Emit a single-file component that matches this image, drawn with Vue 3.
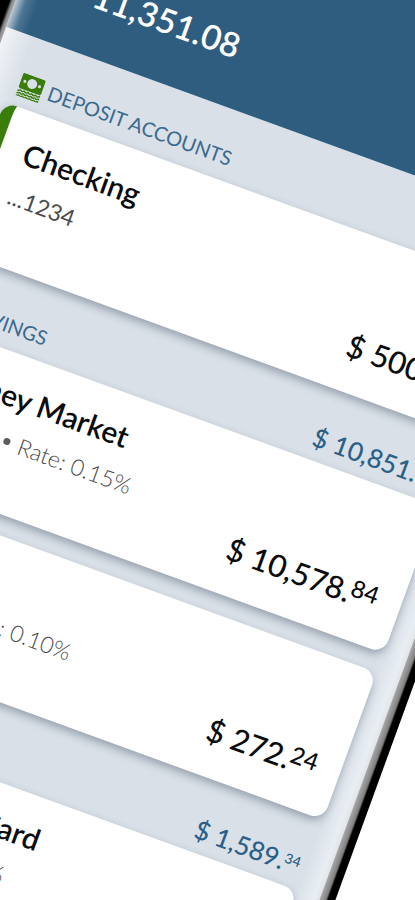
<template>
  <main class="stage">
    <div class="phone">
      <div class="screen">
        <header class="summary">
          <p class="balance">11,351.08</p>
        </header>

        <section v-for="group in groups" :key="group.name" class="group">
          <div class="heading" :class="{ inset: group.inset }">
            <svg class="icon" viewBox="0 0 24 24" aria-hidden="true">
              <path
                fill-rule="evenodd"
                d="M2 0h20a2 2 0 0 1 2 2v12a2 2 0 0 1-2 2H2a2 2 0 0 1-2-2V2a2 2 0 0 1 2-2zM12 3a5 5 0 1 0 0 10a5 5 0 1 0 0-10zM4.200 6.500a1.500 1.500 0 1 0 0 3a1.500 1.500 0 1 0 0-3zM19.800 6.500a1.500 1.500 0 1 0 0 3a1.500 1.500 0 1 0 0-3z"
              />
              <path
                v-for="y in [18, 20.7, 23.4]"
                :key="y"
                class="wave"
                :d="`M0 ${y}q1 1 2 0t2 0t2 0t2 0t2 0t2 0t2 0t2 0t2 0t2 0t2 0t2 0`"
              />
            </svg>
            <h2>{{ group.name }}</h2>
            <p v-if="group.total" class="total">
              $ {{ group.total[0] }}.<sup>{{ group.total[1] }}</sup>
            </p>
          </div>

          <ul class="cards">
            <li
              v-for="account in group.accounts"
              :key="account.name"
              class="card"
              :class="group.color"
            >
              <h3>{{ account.name }}</h3>
              <p class="details">
                <span class="number">{{ account.number }}</span>
                <template v-if="account.rate">
                  <span class="dot"></span>
                  <span>Rate: {{ account.rate }}</span>
                </template>
              </p>
              <p class="amount">
                $ {{ account.amount[0] }}.<sup>{{ account.amount[1] }}</sup>
              </p>
            </li>
          </ul>
        </section>
      </div>
    </div>
  </main>
</template>

<script setup>
const groups = [
  {
    name: 'DEPOSIT ACCOUNTS',
    color: 'green',
    accounts: [{ name: 'Checking', number: '...1234', amount: ['500', '00'] }],
  },
  {
    name: 'SAVINGS',
    color: 'blue',
    inset: true,
    total: ['10,851', '08'],
    accounts: [
      { name: 'Money Market', number: '...1234', rate: '0.15%', amount: ['10,578', '84'] },
      { name: 'Savings', number: '...1234', rate: '0.10%', amount: ['272', '24'] },
    ],
  },
  {
    name: 'LOANS',
    color: 'blue',
    total: ['1,589', '34'],
    accounts: [
      { name: 'Classic Credit Card', number: '...1234', rate: '10.25%', amount: ['1,589', '34'] },
    ],
  },
]
</script>

<style>
body {
  margin: 0;
  background: #fff;
}
</style>

<style scoped>
.stage {
  height: 100vh;
  overflow: hidden;
  font-family: Lato, 'Open Sans', sans-serif;
  color: #0b0c0e;
}

.phone {
  box-sizing: border-box;
  width: 150vw;
  margin-top: -160px;
  padding: 0 15px;
  transform: rotate(20deg);
  transform-origin: 0 160px;
  background: linear-gradient(
    90deg,
    #000 9px,
    #8c8c8c 12px,
    #a8a8a8 15px,
    #a8a8a8 calc(100% - 15px),
    #808080 calc(100% - 9px),
    #000 calc(100% - 7px)
  );
}

.screen {
  background: linear-gradient(
    90deg,
    #f0f3f6,
    #d9e0e7 30px,
    #d9e0e7 calc(100% - 24px),
    #e9eef4 calc(100% - 6px),
    #e2e5e8
  );
}

.summary {
  box-sizing: border-box;
  display: flex;
  align-items: flex-end;
  height: 183px;
  padding: 0 24px 39px 72px;
  background: linear-gradient(90deg, #b9c8d4, #4d7594 10px, #2f5d80 22px);
}

.balance {
  margin: 0;
  font-size: 34px;
  font-weight: 600;
  line-height: 44px;
  color: #fff;
}

.group {
  padding: 0 24px;
}

.heading {
  box-sizing: border-box;
  display: flex;
  align-items: flex-end;
  gap: 6px;
  height: 75px;
  padding: 0 6px 10px 8px;
}

.heading.inset {
  padding-right: 14px;
}

.group:first-of-type .heading {
  height: 71px;
}

.icon {
  width: 24px;
  height: 24px;
  fill: #3a7d0a;
}

.wave {
  fill: none;
  stroke: #3a7d0a;
  stroke-width: 1.4;
}

h2,
h3,
p {
  margin: 0;
}

h2 {
  flex: 1;
  font-size: 20px;
  font-weight: 400;
  line-height: 28px;
  color: #3a6a8e;
}

.total {
  font-size: 26px;
  font-weight: 500;
  line-height: 28px;
  color: #2a5f88;
}

.cards {
  display: flex;
  flex-direction: column;
  gap: 20px;
  margin: 0;
  padding: 0;
  list-style: none;
}

.card {
  box-sizing: border-box;
  display: flex;
  flex-direction: column;
  min-height: 157px;
  padding: 23px 24px 35px;
  border-left: 12px solid #2f5d80;
  border-radius: 14px;
  background: #fff;
  box-shadow: 0 4px 9px rgba(60, 75, 95, 0.42);
}

.card.green {
  border-left-color: #3a7d0a;
}

h3 {
  font-size: 30px;
  font-weight: 600;
  line-height: 36px;
}

.details {
  display: flex;
  align-items: center;
  gap: 9px;
  margin-top: 15px;
  font-size: 23px;
  font-weight: 300;
  line-height: 24px;
  color: #4c4c4c;
}

.number {
  font-weight: 400;
}

.dot {
  width: 7px;
  height: 7px;
  border-radius: 50%;
  background: #5c5c5c;
}

.amount {
  margin-top: auto;
  font-size: 31px;
  font-weight: 500;
  line-height: 24px;
  text-align: right;
}

sup {
  font-size: 24px;
  line-height: 0;
  vertical-align: 8px;
}

.total sup {
  font-size: 14px;
}
</style>
